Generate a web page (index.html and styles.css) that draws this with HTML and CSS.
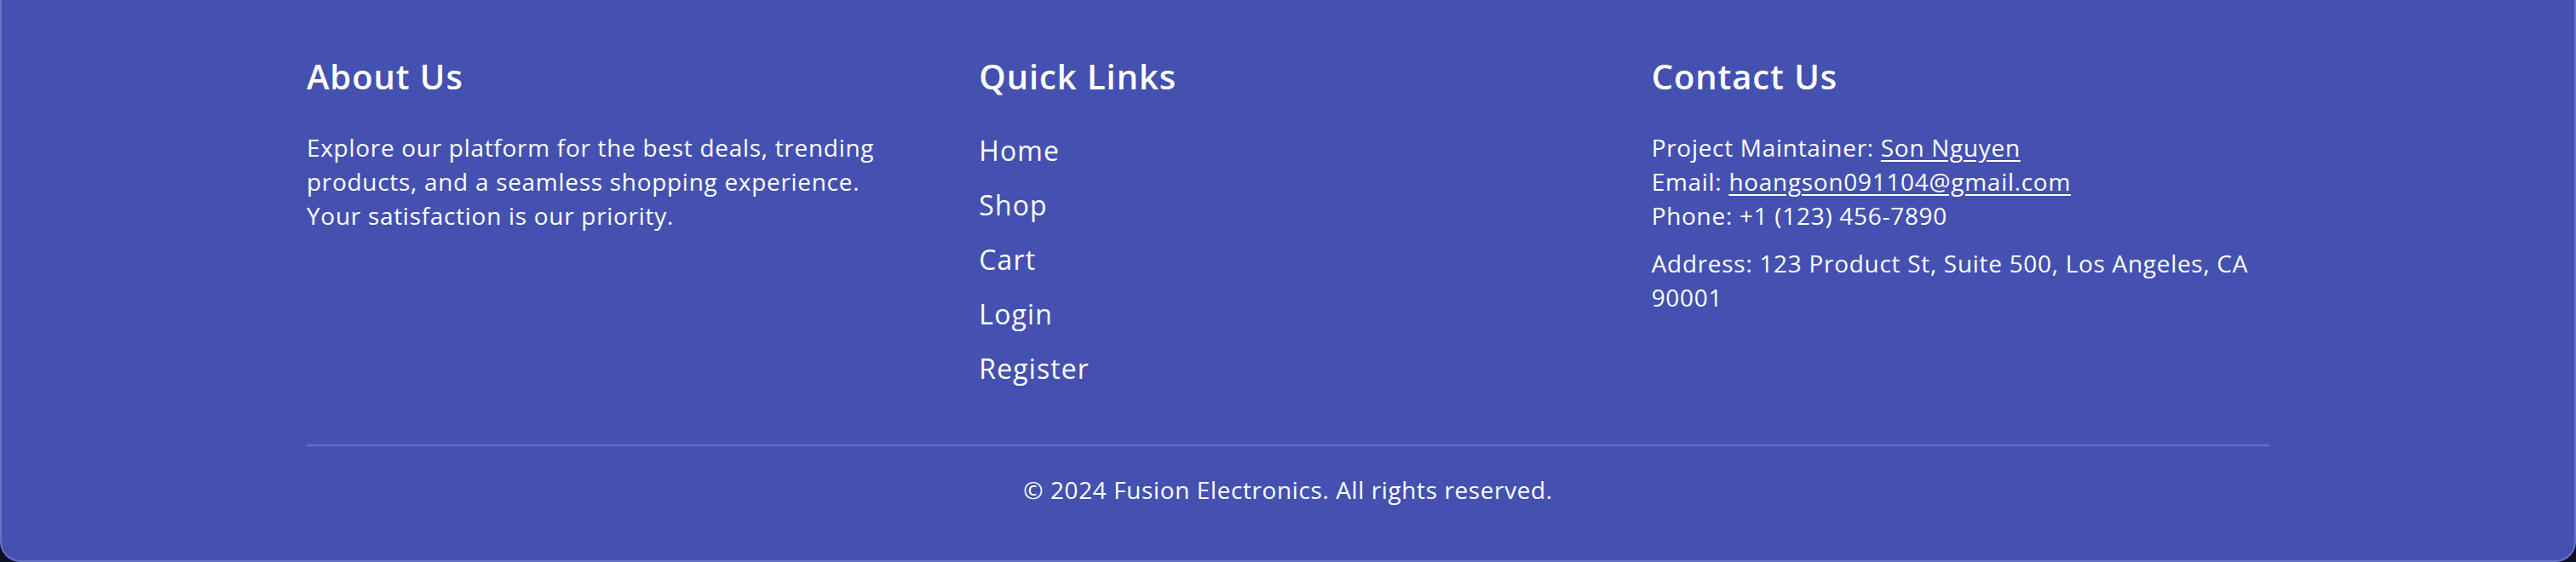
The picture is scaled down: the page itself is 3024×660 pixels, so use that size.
FILE: index.html
```html
<!DOCTYPE html>
<html lang="en">
<head>
<meta charset="utf-8">
<title>Fusion Electronics Footer</title>
<link rel="stylesheet" href="styles.css">
</head>
<body>
<footer class="site-footer">
  <div class="footer-inner">
    <div class="footer-grid">
      <section class="footer-col">
        <h3 class="footer-title">About Us</h3>
        <p class="footer-text footer-about">Explore our platform for the best deals, trending products, and a seamless shopping experience. Your satisfaction is our priority.</p>
      </section>
      <section class="footer-col">
        <h3 class="footer-title">Quick Links</h3>
        <ul class="footer-links">
          <li><a href="#">Home</a></li>
          <li><a href="#">Shop</a></li>
          <li><a href="#">Cart</a></li>
          <li><a href="#">Login</a></li>
          <li><a href="#">Register</a></li>
        </ul>
      </section>
      <section class="footer-col">
        <h3 class="footer-title">Contact Us</h3>
        <p class="footer-text">Project Maintainer: <a class="footer-ul" href="#">Son Nguyen</a><br>Email: <a class="footer-ul" href="#">hoangson091104@gmail.com</a><br>Phone: +1 (123) 456-7890</p>
        <p class="footer-text footer-address">Address: 123 Product St, Suite 500, Los Angeles, CA 90001</p>
      </section>
    </div>
    <div class="footer-bottom">
      <p class="footer-copy">© 2024 Fusion Electronics. All rights reserved.</p>
    </div>
  </div>
</footer>
</body>
</html>
```
FILE: styles.css
```css
* { box-sizing: border-box; }
html, body { margin: 0; padding: 0; }
body {
  background: #0b1226;
  font-family: "Open Sans", "Liberation Sans", sans-serif;
  color: #ffffff;
  height: 660px;
  overflow: hidden;
}
.site-footer {
  background: #4451b0;
  border: 2px solid #6773c6;
  border-top: 0;
  border-radius: 0 0 24px 24px;
  padding: 62px 0 63px;
}
.footer-inner {
  max-width: 2304px;
  margin: 0 auto;
}
.footer-grid {
  display: grid;
  grid-template-columns: repeat(3, 1fr);
  column-gap: 64px;
}
.footer-title {
  margin: 0 0 35px;
  font-size: 40px;
  line-height: 56px;
  font-weight: 600;
  letter-spacing: 0.9px;
}
.footer-text {
  margin: 0;
  font-size: 28px;
  line-height: 40px;
  letter-spacing: 0.7px;
}
.footer-about { max-width: 700px; }
.footer-address { margin-top: 16px; }
.footer-links {
  list-style: none;
  margin: 0;
  padding: 0;
  display: flex;
  flex-direction: column;
  gap: 16px;
}
.footer-links a {
  color: #ffffff;
  text-decoration: none;
  font-size: 32px;
  line-height: 48px;
  letter-spacing: 1.1px;
  display: block;
}
.footer-ul {
  color: #ffffff;
  text-decoration: underline;
  text-underline-offset: 4px;
}
.footer-bottom {
  margin-top: 65px;
  border-top: 2px solid #6772c4;
  padding-top: 31px;
}
.footer-copy {
  margin: 0;
  text-align: center;
  font-size: 28px;
  line-height: 40px;
  letter-spacing: 0.6px;
}
```
